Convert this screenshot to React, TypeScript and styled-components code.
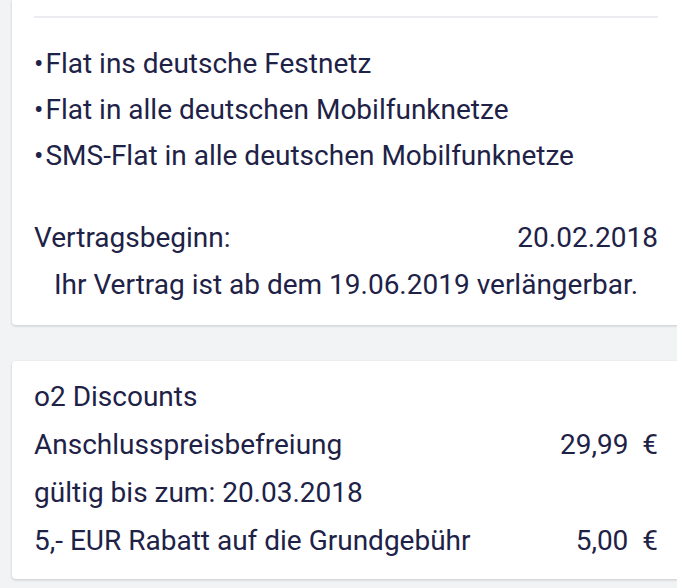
import styled, { createGlobalStyle } from 'styled-components';

const GlobalStyle = createGlobalStyle`
  html, body {
    margin: 0;
    padding: 0;
    background-color: #F2F3F5;
    overflow: hidden;
  }
  body {
    font-family: Roboto, 'Noto Sans', sans-serif;
    color: #1E2247;
  }
`

const Page = styled.div`
  display: flex;
  flex-direction: column;
  gap: 36px;
  width: 677px;
  height: 588px;
  padding-left: 12px;
  box-sizing: border-box;
  overflow: hidden;
`

const Card = styled.div<{ $cut?: boolean }>`
  background-color: #FFFFFF;
  width: 668px;
  flex-shrink: 0;
  box-sizing: border-box;
  padding: ${p => (p.$cut ? '0 22px 17px 22px' : '12px 22px 14px 22px')};
  border-radius: ${p => (p.$cut ? '0 0 4px 4px' : '4px')};
  box-shadow: 0 1px 3px rgba(0, 0, 0, 0.18);
`

const Divider = styled.div`
  height: 2px;
  background-color: #EBECEF;
  margin-top: 16px;
`

const List = styled.ul`
  list-style: none;
  margin: 23px 0 0 0;
  padding: 0;
`

const Item = styled.li`
  font-size: 28px;
  line-height: 46px;
  margin: 0;

  &::before {
    content: '•';
    margin-right: 2px;
  }
`

const Row = styled.div<{ $center?: boolean; $tight?: boolean }>`
  display: flex;
  justify-content: ${p => (p.$center ? 'center' : 'space-between')};
  font-size: 28px;
  line-height: ${p => (p.$tight ? '47px' : '48px')};
`

const Spacer = styled.div`
  height: 35px;
`

const Amount = styled.span`
  white-space: pre;
`

const App = () => {
  return (
    <>
      <GlobalStyle />
      <Page>
        <Card $cut>
          <Divider />
          <List>
            <Item>Flat ins deutsche Festnetz</Item>
            <Item>Flat in alle deutschen Mobilfunknetze</Item>
            <Item>SMS-Flat in alle deutschen Mobilfunknetze</Item>
          </List>
          <Spacer />
          <Row $tight>
            <span>Vertragsbeginn:</span>
            <span>20.02.2018</span>
          </Row>
          <Row $center $tight>Ihr Vertrag ist ab dem 19.06.2019 verlängerbar.</Row>
        </Card>
        <Card>
          <Row>o2 Discounts</Row>
          <Row>
            <span>Anschlusspreisbefreiung</span>
            <Amount>29,99  €</Amount>
          </Row>
          <Row>gültig bis zum: 20.03.2018</Row>
          <Row>
            <span>5,- EUR Rabatt auf die Grundgebühr</span>
            <Amount>5,00  €</Amount>
          </Row>
        </Card>
      </Page>
    </>
  )
}

export default App
